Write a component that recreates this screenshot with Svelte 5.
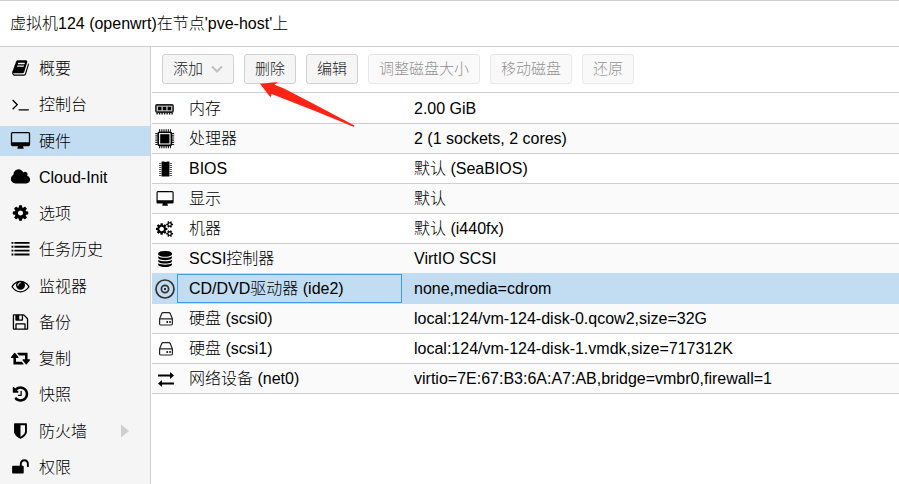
<script>
  const book = 'M1703 478q40 57 18 129l-275 906q-19 64-76.5 107.5t-122.5 43.5h-923q-77 0-148.5-53.5t-99.5-131.5q-24-67-2-127 0-4 3-27t4-37q1-8-3-21.5t-3-19.5q2-11 8-21t16.5-23.5 16.5-23.5q23-38 45-91.5t30-91.5q3-10 .5-30t-.5-28q3-11 17-28t17-23q21-36 42-92t25-90q1-9-2.5-32t.5-28q4-13 22-30.5t22-22.5q19-26 42.5-84.5t27.5-96.5q1-8-3-25.5t-2-26.5q2-8 9-18t18-23 17-21q8-12 16.5-30.5t15-35 16-36 19.5-32 26.5-23.5 36-11.5 47.5 5.5l-1 3q38-9 51-9h761q74 0 114 56t18 130l-274 906q-36 119-71.5 153.5t-128.5 34.5h-869q-27 0-38 15-11 16-1 43 24 70 144 70h923q29 0 56-15.5t35-41.5l300-987q7-22 5-57 38 15 59 43zm-1064 2q-4 13 2 22.5t20 9.5h608q13 0 25.5-9.5t16.5-22.5l21-64q4-13-2-22.5t-20-9.5h-608q-13 0-25.5 9.5t-16.5 22.5zm-83 256q-4 13 2 22.5t20 9.5h608q13 0 25.5-9.5t16.5-22.5l21-64q4-13-2-22.5t-20-9.5h-608q-13 0-25.5 9.5t-16.5 22.5z';
  const terminal = 'M649 983l-466 466q-10 10-23 10t-23-10l-50-50q-10-10-10-23t10-23l393-393-393-393q-10-10-10-23t10-23l50-50q10-10 23-10t23 10l466 466q10 10 10 23t-10 23zm1079 457v64q0 14-9 23t-23 9h-960q-14 0-23-9t-9-23v-64q0-14 9-23t23-9h960q14 0 23 9t9 23z';
  const desktop = 'M1856 992v-832q0-13-9.5-22.5t-22.5-9.5h-1600q-13 0-22.5 9.5t-9.5 22.5v832q0 13 9.5 22.5t22.5 9.5h1600q13 0 22.5-9.5t9.5-22.5zm128-832v1088q0 66-47 113t-113 47h-544q0 37 16 77.5t32 71 16 43.5q0 26-19 45t-45 19h-512q-26 0-45-19t-19-45q0-14 16-44t32-70 16-78h-544q-66 0-113-47t-47-113v-1088q0-66 47-113t113-47h1600q66 0 113 47t47 113z';
  const cloud = 'M1984 1152q0 159-112.5 271.5t-271.5 112.5h-1088q-185 0-316.5-131.5t-131.5-316.5q0-132 71-241.5t187-163.5q-2-28-2-43 0-212 150-362t362-150q158 0 286.5 88t187.5 230q70-62 166-62 106 0 181 75t75 181q0 75-41 138 129 30 213 134.5t84 239.5z';
  const cog = 'M1152 896q0-106-75-181t-181-75-181 75-75 181 75 181 181 75 181-75 75-181zm512-109v222q0 12-8 23t-20 13l-185 28q-19 54-39 91 35 50 107 138 10 12 10 25t-9 23q-27 37-99 108t-94 71q-12 0-26-9l-138-108q-44 23-91 38-16 136-29 186-7 28-36 28h-222q-14 0-24.5-8.5t-11.5-21.5l-28-184q-49-16-90-37l-141 107q-10 9-25 9-14 0-25-11-126-114-165-168-7-10-7-23 0-12 8-23 15-21 51-66.5t54-70.5q-27-50-41-99l-183-27q-13-2-21-12.5t-8-23.5v-222q0-12 8-23t19-13l186-28q14-46 39-92-40-57-107-138-10-12-10-24 0-10 9-23 26-36 98.5-107.5t94.5-71.5q13 0 26 10l138 107q44-23 91-38 16-136 29-186 7-28 36-28h222q14 0 24.5 8.5t11.5 21.5l28 184q49 16 90 37l142-107q9-9 24-9 13 0 25 10 129 119 165 170 7 8 7 22 0 12-8 23-15 21-51 66.5t-54 70.5q26 50 41 98l183 28q13 2 21 12.5t8 23.5z';
  const list = 'M0 192h192v192h-192zM0 576h192v192h-192zM0 960h192v192h-192zM0 1344h192v192h-192zM288 192h1504v192h-1504zM288 576h1504v192h-1504zM288 960h1504v192h-1504zM288 1344h1504v192h-1504z';
  const eye = 'M1664 960q-152-236-381-353 61 104 61 225 0 185-131.5 316.5t-316.5 131.5-316.5-131.5-131.5-316.5q0-121 61-225-229 117-381 353 133 205 333.5 326.5t434.5 121.5 434.5-121.5 333.5-326.5zm-720-384q0-20-14-34t-34-14q-125 0-214.5 89.5t-89.5 214.5q0 20 14 34t34 14 34-14 14-34q0-86 61-147t147-61q20 0 34-14t14-34zm848 384q0 34-20 69-140 230-376.5 368.5t-499.5 138.5-499.5-139-376.5-368q-20-35-20-69t20-69q140-229 376.5-368t499.5-139 499.5 139 376.5 368q20 35 20 69z';
  const floppy = 'M512 1536h768v-384h-768v384zm896 0h128v-896q0-14-10-38.5t-20-34.5l-281-281q-10-10-34-20t-39-10v416q0 40-28 68t-68 28h-576q-40 0-68-28t-28-68v-416h-128v1280h128v-416q0-40 28-68t68-28h832q40 0 68 28t28 68v416zm-384-928v-320q0-13-9.5-22.5t-22.5-9.5h-192q-13 0-22.5 9.5t-9.5 22.5v320q0 13 9.5 22.5t22.5 9.5h192q13 0 22.5-9.5t9.5-22.5zm640 32v928q0 40-28 68t-68 28h-1344q-40 0-68-28t-28-68v-1344q0-40 28-68t68-28h928q40 0 88 20t76 48l280 280q28 28 48 76t20 88z';
  const retweet = 'M1280 1504q0 13-9.5 22.5t-22.5 9.5h-960q-8 0-13.5-2t-9-7-5.5-8-3-11.5-1-11.5v-600h-192q-26 0-45-19t-19-45q0-24 15-41l320-384q19-22 49-22t49 22l320 384q15 17 15 41 0 26-19 45t-45 19h-192v384h576q16 0 25 11l160 192q7 10 7 21zm640-416q0 24-15 41l-320 384q-20 23-49 23t-49-23l-320-384q-15-17-15-41 0-26 19-45t45-19h192v-384h-576q-16 0-25-12l-160-192q-7-9-7-20 0-13 9.5-22.5t22.5-9.5h960q8 0 13.5 2t9 7 5.5 8 3 11.5 1 11.5v600h192q26 0 45 19t19 45z';
  const history = 'M1664 896q0 156-61 298t-164 245-245 164-298 61q-172 0-327-72.5t-264-204.5q-7-10-6.5-22.5t8.5-20.5l137-138q10-9 25-9 16 2 23 12 73 95 179 147t225 52q104 0 198.5-40.5t163.5-109.5 109.5-163.5 40.5-198.5-40.5-198.5-109.5-163.5-163.5-109.5-198.5-40.5q-98 0-188 35.5t-160 101.5l137 138q31 30 14 69-17 40-59 40h-448q-26 0-45-19t-19-45v-448q0-42 40-59 39-17 69 14l130 129q107-101 244.5-156.5t284.5-55.5q156 0 298 61t245 164 164 245 61 298zm-640-288v448q0 14-9 23t-23 9h-320q-14 0-23-9t-9-23v-64q0-14 9-23t23-9h224v-352q0-14 9-23t23-9h64q14 0 23 9t9 23z';
  const shield = 'M1344 960v-640h-448v1137q119-63 213-137 235-184 235-360zm192-768v768q0 86-33.5 170.5t-83 150-118 127.5-126.5 103-121 77.5-89.5 49.5-42.5 20q-12 6-26 6t-26-6q-16-7-42.5-20t-89.5-49.5-121-77.5-126.5-103-118-127.5-83-150-33.5-170.5v-768q0-26 19-45t45-19h1152q26 0 45 19t19 45z';
  const unlock = 'M1728 576v256q0 26-19 45t-45 19h-64q-26 0-45-19t-19-45v-256q0-106-75-181t-181-75-181 75-75 181v192h96q40 0 68 28t28 68v576q0 40-28 68t-68 28h-960q-40 0-68-28t-28-68v-576q0-40 28-68t68-28h672v-192q0-185 131.5-316.5t316.5-131.5 316.5 131.5 131.5 316.5z';
  const cogs = 'M832 896q0-106-75-181t-181-75-181 75-75 181 75 181 181 75 181-75 75-181zm768 512q0-52-38-90t-90-38-90 38-38 90q0 53 37.5 90.5t90.5 37.5 90.5-37.5 37.5-90.5zm0-1024q0-52-38-90t-90-38-90 38-38 90q0 53 37.5 90.5t90.5 37.5 90.5-37.5 37.5-90.5zm-384 421v185q0 10-7 19.5t-16 10.5l-155 24q-11 35-32 76 34 48 90 115 7 11 7 20 0 12-7 19-23 30-82.5 89.5t-78.5 59.5q-11 0-21-7l-115-90q-37 19-77 31-11 108-23 155-7 24-30 24h-186q-11 0-20-7.5t-10-17.5l-23-153q-34-10-75-31l-118 89q-7 7-20 7-11 0-21-8-144-133-144-160 0-9 7-19 10-14 41-53t47-61q-23-44-35-82l-152-24q-10-1-17-9.5t-7-19.5v-185q0-10 7-19.5t16-10.5l155-24q11-35 32-76-34-48-90-115-7-11-7-20 0-12 7-20 22-30 82-89t79-59q11 0 21 7l115 90q34-18 77-32 11-108 23-154 7-24 30-24h186q11 0 20 7.5t10 17.5l23 153q34 10 75 31l118-89q8-7 20-7 11 0 21 8 144 133 144 160 0 8-7 19-12 16-42 54t-45 60q23 48 34 82l152 23q10 2 17 10.5t7 19.5zm640 533v140q0 16-149 31-12 27-30 52 51 113 51 138 0 4-4 7-122 71-124 71-8 0-46-47t-52-68q-20 2-30 2t-30-2q-14 21-52 68t-46 47q-2 0-124-71-4-3-4-7 0-25 51-138-18-25-30-52-149-15-149-31v-140q0-16 149-31 13-29 30-52-51-113-51-138 0-4 4-7 4-2 35-20t59-34 30-16q8 0 46 46.5t52 67.5q20-2 30-2t30 2q51-71 92-112l6-2q4 0 124 70 4 3 4 7 0 25-51 138 17 23 30 52 149 15 149 31zm0-1024v140q0 16-149 31-12 27-30 52 51 113 51 138 0 4-4 7-122 71-124 71-8 0-46-47t-52-68q-20 2-30 2t-30-2q-14 21-52 68t-46 47q-2 0-124-71-4-3-4-7 0-25 51-138-18-25-30-52-149-15-149-31v-140q0-16 149-31 13-29 30-52-51-113-51-138 0-4 4-7 4-2 35-20t59-34 30-16q8 0 46 46.5t52 67.5q20-2 30-2t30 2q51-71 92-112l6-2q4 0 124 70 4 3 4 7 0 25-51 138 17 23 30 52 149 15 149 31z';
  const database = 'M896 768q237 0 443-43t325-127v170q0 69-103 128t-280 93.5-385 34.5-385-34.5-280-93.5-103-128v-170q119 84 325 127t443 43zm0 768q237 0 443-43t325-127v170q0 69-103 128t-280 93.5-385 34.5-385-34.5-280-93.5-103-128v-170q119 84 325 127t443 43zm0-384q237 0 443-43t325-127v170q0 69-103 128t-280 93.5-385 34.5-385-34.5-280-93.5-103-128v-170q119 84 325 127t443 43zm0-1152q208 0 385 34.5t280 93.5 103 128v128q0 69-103 128t-280 93.5-385 34.5-385-34.5-280-93.5-103-128v-128q0-69 103-128t280-93.5 385-34.5z';

  // cx is the horizontal centre of the glyph on its 1792-unit em
  const nav = [
    { label: '概要', d: book, cx: 896 },
    { label: '控制台', d: terminal, cx: 896 },
    { label: '硬件', d: desktop, cx: 1024, active: true },
    { label: 'Cloud-Init', d: cloud, cx: 1024 },
    { label: '选项', d: cog, cx: 896 },
    { label: '任务历史', d: list, cx: 896 },
    { label: '监视器', d: eye, cx: 896 },
    { label: '备份', d: floppy, cx: 896 },
    { label: '复制', d: retweet, cx: 960 },
    { label: '快照', d: history, cx: 896 },
    { label: '防火墙', d: shield, cx: 896, expandable: true },
    { label: '权限', d: unlock, cx: 896 },
  ];

  const buttons = [
    { label: '添加', menu: true },
    { label: '删除' },
    { label: '编辑' },
    { label: '调整磁盘大小', disabled: true },
    { label: '移动磁盘', disabled: true },
    { label: '还原', disabled: true },
  ];

  const rows = [
    { icon: 'memory', name: '内存', value: '2.00 GiB' },
    { icon: 'cpu', name: '处理器', value: '2 (1 sockets, 2 cores)' },
    { icon: 'bios', name: 'BIOS', value: '默认 (SeaBIOS)' },
    { d: desktop, cx: 960, name: '显示', value: '默认' },
    { d: cogs, cx: 896, name: '机器', value: '默认 (i440fx)' },
    { d: database, cx: 832, name: 'SCSI控制器', value: 'VirtIO SCSI' },
    { icon: 'cd', name: 'CD/DVD驱动器 (ide2)', value: 'none,media=cdrom' },
    { icon: 'disk', name: '硬盘 (scsi0)', value: 'local:124/vm-124-disk-0.qcow2,size=32G' },
    { icon: 'disk', name: '硬盘 (scsi1)', value: 'local:124/vm-124-disk-1.vmdk,size=717312K' },
    { icon: 'network', name: '网络设备 (net0)', value: 'virtio=7E:67:B3:6A:A7:AB,bridge=vmbr0,firewall=1' },
  ];
  let selected = $state(6);
</script>

<div class="page">
  <header><h1>虚拟机124 (openwrt)在节点'pve-host'上</h1></header>
  <div class="body">
    <nav>
      <ul>
        {#each nav as item}
          <li>
            <a href="#{item.label}" class:active={item.active}>
              <svg class="glyph" viewBox="{item.cx - 1024} 0 2048 1792" aria-hidden="true"><path d={item.d} /></svg>
              <span>{item.label}</span>
              {#if item.expandable}
                <svg class="expand" viewBox="0 0 8 14" aria-hidden="true"><path d="M0 0.5L8 7L0 13.5z" /></svg>
              {/if}
            </a>
          </li>
        {/each}
      </ul>
    </nav>
    <main>
      <div class="toolbar">
        {#each buttons as b}
          <button type="button" disabled={b.disabled}>
            {b.label}
            {#if b.menu}
              <svg class="chevron" viewBox="0 0 12 8" aria-hidden="true"><path d="M1 1.5L6 6.5L11 1.5" /></svg>
            {/if}
          </button>
        {/each}
        <svg class="pointer" viewBox="0 0 96 46" aria-hidden="true">
          <path d="M0 1.7L18 0L14.5 2.7L24 6.5L52 21L94.5 43.5L93.5 44.7L55 29L11.6 12L10.6 15.5z" />
        </svg>
      </div>
      <table>
        <tbody>
          {#each rows as row, i}
            <tr class:selected={selected === i} class:before={selected === i + 1} onclick={() => (selected = i)}>
              <td class="icon">
                {#if row.d}
                  <svg class="small" viewBox="{row.cx - 1024} 0 2048 1792" aria-hidden="true"><path d={row.d} /></svg>
                {:else}
                  <svg class="part" viewBox="0 0 20 20" aria-hidden="true">
                    {#if row.icon === 'memory'}
                      <rect x="0.9" y="5.9" width="17.2" height="7.2" rx="1" fill="#c8c8c8" stroke="#222" stroke-width="1.6" />
                      <path d="M3 7.7h3.5v3.6H3zM7.8 7.7h3.5v3.6H7.8zM12.6 7.7h3.5v3.6h-3.5z" />
                      <path d="M1.4 14.6h16.8" fill="none" stroke="#111" stroke-width="1.8" stroke-dasharray="1.4 1.1" />
                    {:else if row.icon === 'cpu'}
                      <path d="M4 1.5h12M4 18h12M1.5 4v12M18 4v12" fill="none" stroke="#222" stroke-width="2.4" stroke-dasharray="1.2 1" />
                      <rect x="3.2" y="3.2" width="13.2" height="13.2" rx="1.4" fill="#eee" stroke="#000" stroke-width="1.6" />
                      <rect x="5.2" y="5.2" width="9.2" height="9.2" />
                    {:else if row.icon === 'bios'}
                      <path d="M5.2 4v13M15.8 4v13" fill="none" stroke="#555" stroke-width="2.4" stroke-dasharray="1 1" />
                      <path d="M6.6 2.5h2.6q1.3 1.2 2.6 0h2.6v15H6.6z" />
                    {:else if row.icon === 'cd'}
                      <g fill="none" stroke="#333"><circle cx="10" cy="10" r="9" stroke-width="1.7" /><circle cx="10" cy="10" r="3.6" stroke-width="1.7" /></g>
                      <circle cx="10" cy="10" r="1" />
                    {:else if row.icon === 'disk'}
                      <path d="M4.6 9.8L6.8 4.6q.3-1 1.2-1h6q.9 0 1.2 1l2.2 5.2v5q0 1.2-1.2 1.2H5.8q-1.2 0-1.2-1.2zM4.8 9.8h12.4" fill="none" stroke="#222" stroke-width="1.2" />
                      <circle cx="12.2" cy="13" r="0.9" /><circle cx="15" cy="13" r="0.9" />
                    {:else}
                      <path d="M3 5.5h12V3l4 3.5L15 10V7.5H3zM19 13.5H7V11L3 14.5L7 18v-2.5h12z" />
                    {/if}
                  </svg>
                {/if}
              </td>
              <td class="name">{row.name}</td>
              <td class="value">{row.value}</td>
            </tr>
          {/each}
        </tbody>
      </table>
    </main>
  </div>
</div>

<style>
  .page {
    display: flex;
    flex-direction: column;
    min-height: 100vh;
    box-sizing: border-box;
    background: #fff;
    color: #000;
    font: 300 16px/28px 'Liberation Sans', 'Noto Sans CJK SC', sans-serif;
    border-top: 1px solid #cfcfcf;
  }
  header {
    padding: 9px 10px 8px;
    border-bottom: 1px solid #cfcfcf;
  }
  h1 {
    margin: 0;
    font: inherit;
  }
  .body {
    display: flex;
    flex: 1;
  }
  nav {
    display: flex;
    flex: none;
    width: 150px;
    background: #f5f5f5;
    border-right: 1px solid #cfcfcf;
  }
  ul {
    display: flex;
    flex: 1;
    flex-direction: column;
    justify-content: space-between;
    max-height: 440px;
    box-sizing: border-box;
    margin: 0;
    padding: 6px 0 2px;
    list-style: none;
  }
  nav a {
    display: flex;
    align-items: center;
    gap: 8px;
    height: 30px;
    padding: 0 21px 0 10px;
    color: inherit;
    text-decoration: none;
  }
  nav a.active {
    background: #c2ddf2;
  }
  nav span {
    padding-top: 2px;
  }
  .glyph {
    width: 21px;
    height: 18px;
  }
  .expand {
    width: 8px;
    height: 14px;
    margin-left: auto;
    fill: #cfcfcf;
  }
  main {
    flex: 1;
    min-width: 0;
    padding-left: 1px;
  }
  .toolbar {
    position: relative;
    display: flex;
    gap: 10px;
    padding: 7px 10px 8px;
    margin-bottom: 1px;
    border-bottom: 1px solid #cfcfcf;
  }
  button {
    display: flex;
    align-items: center;
    gap: 8px;
    height: 30px;
    padding: 0 10px;
    border: 1px solid #d0d0d0;
    border-radius: 3px;
    background: #f5f5f5;
    color: #222;
    font: inherit;
    font-size: 15px;
    white-space: nowrap;
  }
  button:disabled {
    opacity: 0.5;
  }
  .chevron {
    width: 12px;
    height: 8px;
    fill: none;
    stroke: #c0c0c0;
    stroke-width: 2;
  }
  .pointer {
    position: absolute;
    left: 108px;
    top: 35px;
    width: 96px;
    height: 46px;
    fill: #ff2414;
    pointer-events: none;
  }
  table {
    width: 100%;
    border-collapse: separate;
    border-spacing: 0;
    table-layout: fixed;
  }
  td {
    height: 29px;
    box-sizing: border-box;
    height: 30px;
    padding: 1px 12px 0;
    border-bottom: 1px solid #cfcfcf;
    line-height: 28px;
    white-space: nowrap;
  }
  td.icon {
    width: 25px;
    padding: 0;
  }
  td.name {
    width: 225px;
  }
  tr:nth-child(even) {
    background: #fafafa;
  }
  tr.before td {
    border-bottom-color: #c2ddf2;
  }
  tr.selected {
    background: #c2ddf2;
  }
  tr.selected td {
    border-bottom-color: #c2ddf2;
  }
  tr.selected .name {
    box-shadow: inset 0 0 0 1px #4a98d6;
  }
  td svg {
    display: block;
    margin: 0 auto;
  }
  .small {
    width: 19px;
    height: 16px;
  }
  .part {
    width: 20px;
    height: 20px;
  }
</style>
